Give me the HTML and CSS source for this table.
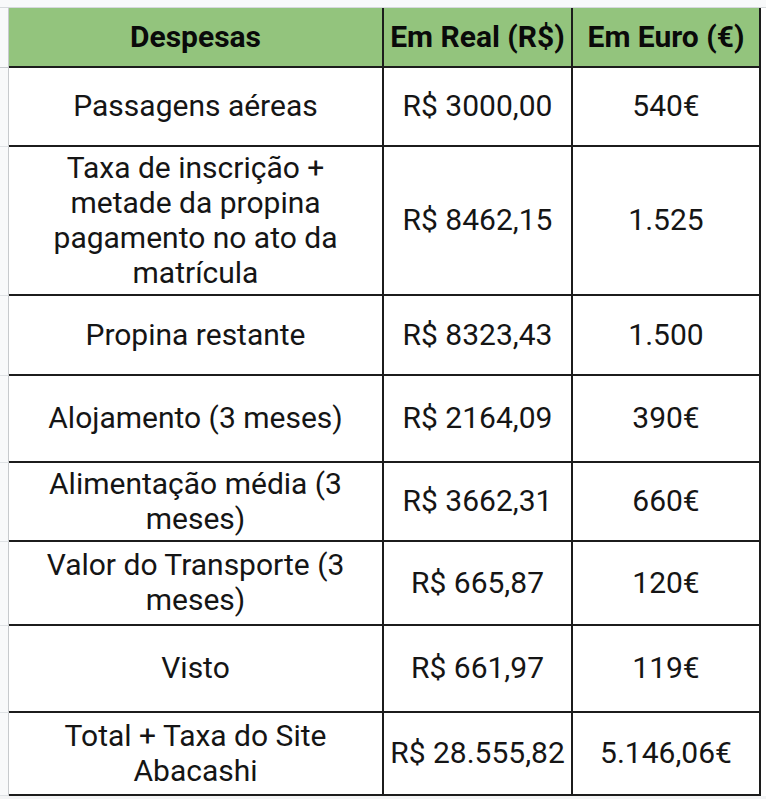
FILE: index.html
```html
<!DOCTYPE html>
<html lang="pt">
<head>
<meta charset="utf-8">
<title>Despesas</title>
<link rel="stylesheet" href="styles.css">
</head>
<body>
<div class="sheet">
  <div class="top-strip"></div>
  <div class="grid">
    <div class="gutter gutter-head"></div>
    <div class="cell head">Despesas</div>
    <div class="cell head">Em Real (R$)</div>
    <div class="cell head">Em Euro (€)</div>

    <div class="gutter"></div>
    <div class="cell">Passagens aéreas</div>
    <div class="cell">R$ 3000,00</div>
    <div class="cell">540€</div>

    <div class="gutter"></div>
    <div class="cell">Taxa de inscrição +<br>metade da propina<br>pagamento no ato da<br>matrícula</div>
    <div class="cell">R$ 8462,15</div>
    <div class="cell">1.525</div>

    <div class="gutter"></div>
    <div class="cell">Propina restante</div>
    <div class="cell">R$ 8323,43</div>
    <div class="cell">1.500</div>

    <div class="gutter"></div>
    <div class="cell">Alojamento (3 meses)</div>
    <div class="cell">R$ 2164,09</div>
    <div class="cell">390€</div>

    <div class="gutter"></div>
    <div class="cell">Alimentação média (3<br>meses)</div>
    <div class="cell">R$ 3662,31</div>
    <div class="cell">660€</div>

    <div class="gutter"></div>
    <div class="cell">Valor do Transporte (3<br>meses)</div>
    <div class="cell">R$ 665,87</div>
    <div class="cell">120€</div>

    <div class="gutter"></div>
    <div class="cell">Visto</div>
    <div class="cell">R$ 661,97</div>
    <div class="cell">119€</div>

    <div class="gutter"></div>
    <div class="cell">Total + Taxa do Site<br>Abacashi</div>
    <div class="cell">R$ 28.555,82</div>
    <div class="cell">5.146,06€</div>
  </div>
  <div class="bottom-strip"></div>
</div>
</body>
</html>
```

FILE: styles.css
```css
html, body {
  margin: 0;
  padding: 0;
  background: #ffffff;
}

.sheet {
  width: 766px;
  height: 799px;
  overflow: hidden;
  font-family: Roboto, "Liberation Sans", sans-serif;
  color: #151515;
}

.top-strip {
  height: 7px;
  background: #f8f9fa;
  border-bottom: 1px solid #d6d9dc;
}

.grid {
  display: grid;
  grid-template-columns: 9px 375px 189px 188px;
  grid-template-rows: 60px 79px 149px 80px 87px 79px 84px 87px 83px;
}

.gutter {
  background: #f8f9fa;
  border-right: 1px solid #c7cacd;
  border-bottom: 1px solid #dfe2e5;
  box-sizing: border-box;
}

.gutter-head {
  border-bottom-color: #c7cacd;
}

.cell {
  box-sizing: border-box;
  display: flex;
  align-items: center;
  justify-content: center;
  text-align: center;
  border-right: 2px solid #1c1c1c;
  border-bottom: 2px solid #1c1c1c;
  font-size: 30px;
  line-height: 35px;
  padding: 0 2px 2px;
  white-space: nowrap;
}

.head {
  background: #93c47d;
  font-weight: bold;
  color: #0a0a0a;
  padding: 0 0 2px;
}

.bottom-strip {
  height: 4px;
  background: #f3f4f5;
}
```
